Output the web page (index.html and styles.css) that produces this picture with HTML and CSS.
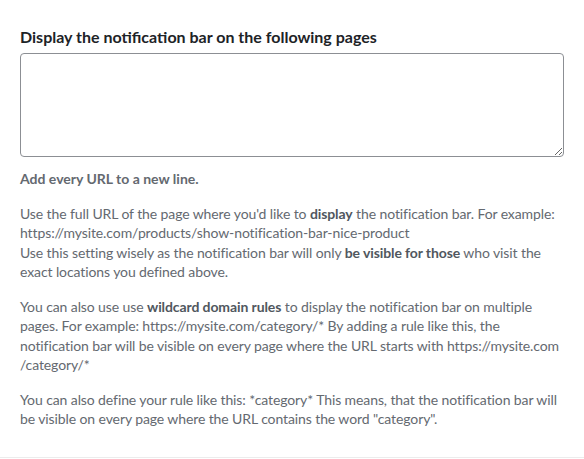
FILE: index.html
```html
<!DOCTYPE html>
<html lang="en">
<head>
  <meta charset="UTF-8">
  <meta name="viewport" content="width=device-width, initial-scale=1.0">
  <title>Notification Bar Pages</title>
  <link rel="stylesheet" href="styles.css">
</head>
<body>
  <div class="setting">
    <label class="setting-title" for="pages">Display the notification bar on the following pages</label>
    <textarea id="pages" class="setting-input"></textarea>

    <p class="hint">Add every URL to a new line.</p>

    <p class="desc">
      Use the full URL of the page where you'd like to <strong>display</strong> the notification bar. For example: https://mysite.com/products/show-notification-bar-nice-product<br>
      Use this setting wisely as the notification bar will only <strong>be visible for those</strong> who visit the exact locations you defined above.
    </p>

    <p class="desc">
      You can also use use <strong>wildcard domain rules</strong> to display the notification bar on multiple pages. For example: https://mysite.com/category/* By adding a rule like this, the notification bar will be visible on every page where the URL starts with https://mysite.com /category/*
    </p>

    <p class="desc">
      You can also define your rule like this: *category* This means, that the notification bar will be visible on every page where the URL contains the word "category".
    </p>
  </div>
</body>
</html>
```

FILE: styles.css
```css
body {
  margin: 0;
  background: #ffffff;
  font-family: Lato, "Liberation Sans", Arial, sans-serif;
}

.setting {
  padding: 26px 20px 28px;
  border-bottom: 1px solid #ececec;
}

.setting-title {
  display: block;
  font-size: 16px;
  font-weight: bold;
  line-height: 21px;
  color: #1d2327;
  margin-bottom: 6px;
}

.setting-input {
  display: block;
  box-sizing: border-box;
  width: 100%;
  height: 104px;
  border: 1px solid #8c8f94;
  border-radius: 4px;
  padding: 6px 8px;
  font: inherit;
  resize: vertical;
}

.hint, .desc {
  font-size: 14px;
  line-height: 19.5px;
  color: #646970;
  margin: 0 0 15px;
}

.hint {
  margin-top: 12px;
  font-weight: bold;
}

.desc {
  letter-spacing: -0.1px;
}

.desc strong {
  color: #50575e;
}

.desc:last-child {
  margin-bottom: 0;
}
```
